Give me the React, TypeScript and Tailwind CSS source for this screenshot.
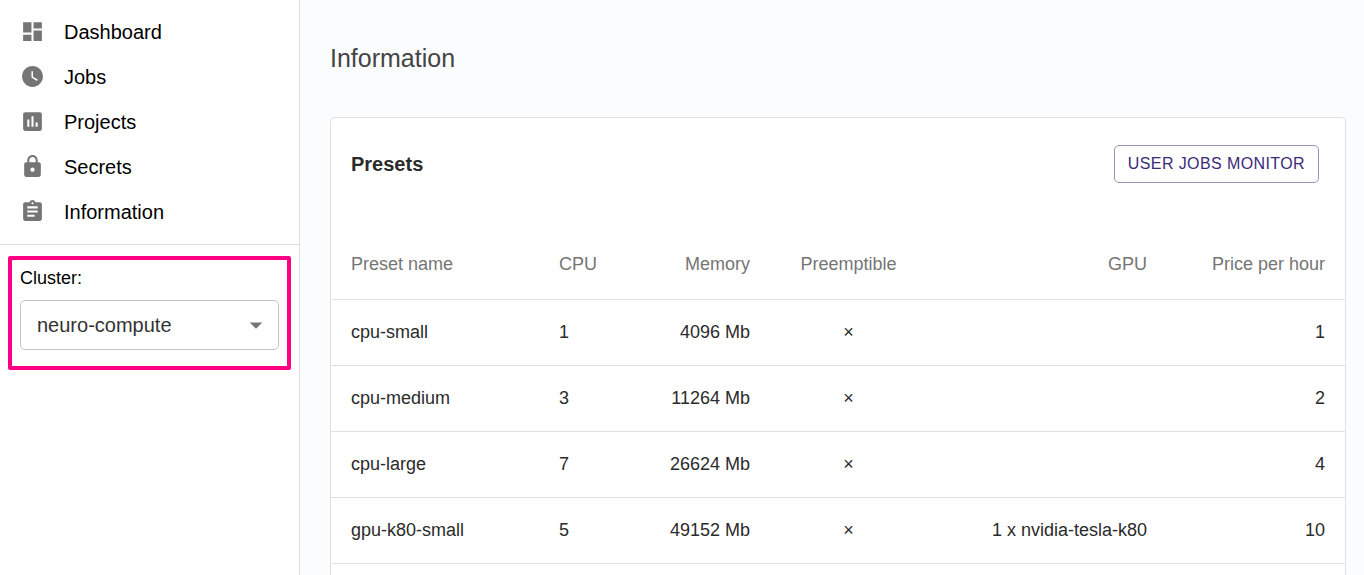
import React from "react";
import {
  MdArrowDropDown,
  MdAssessment,
  MdAssignment,
  MdDashboard,
  MdLock,
  MdWatchLater,
} from "react-icons/md";
import type { IconType } from "react-icons";

const navItems: { label: string; icon: IconType }[] = [
  { label: "Dashboard", icon: MdDashboard },
  { label: "Jobs", icon: MdWatchLater },
  { label: "Projects", icon: MdAssessment },
  { label: "Secrets", icon: MdLock },
  { label: "Information", icon: MdAssignment },
];

type Preset = { name: string; cpu: number; memory: string; gpu: string; price: number };

const presets: Preset[] = [
  { name: "cpu-small", cpu: 1, memory: "4096 Mb", gpu: "", price: 1 },
  { name: "cpu-medium", cpu: 3, memory: "11264 Mb", gpu: "", price: 2 },
  { name: "cpu-large", cpu: 7, memory: "26624 Mb", gpu: "", price: 4 },
  { name: "gpu-k80-small", cpu: 5, memory: "49152 Mb", gpu: "1 x nvidia-tesla-k80", price: 10 },
];

function Sidebar() {
  return (
    <aside className="w-[300px] shrink-0 border-r border-[#dcdde0] bg-white text-black">
      <nav className="border-b border-[#dedede] pt-[9px] pb-[10px]">
        <ul>
          {navItems.map(({ label, icon: Icon }) => (
            <li key={label}>
              <a href="#" className="flex h-[45px] items-center gap-[19px] px-5 text-[20px]">
                <Icon className="size-[25px] text-[#757575]" aria-hidden="true" />
                {label}
              </a>
            </li>
          ))}
        </ul>
      </nav>
      <div className="mx-2 mt-[11px] rounded-xs border-4 border-[#ff0084] px-2 pb-4">
        <label htmlFor="cluster" className="block h-10 text-[18px] leading-9">
          Cluster:
        </label>
        <div className="relative">
          <select
            id="cluster"
            className="h-[50px] w-full appearance-none rounded-[5px] border border-[#c4c4c4] bg-white px-4 text-[20px] text-[#333333]"
          >
            <option>neuro-compute</option>
          </select>
          <MdArrowDropDown
            className="pointer-events-none absolute top-2.5 right-2 size-[30px] text-[#757575]"
            aria-hidden="true"
          />
        </div>
      </div>
    </aside>
  );
}

function PresetTable() {
  return (
    <table className="w-full table-fixed text-[18px] text-[#2b2b2b]">
      <colgroup>
        <col className="w-[208px]" />
        <col className="w-[100px]" />
        <col className="w-[141px]" />
        <col className="w-[147px]" />
        <col className="w-[250px]" />
        <col className="w-[168px]" />
      </colgroup>
      <thead>
        <tr className="h-[68px] border-b border-[#e0e0e0] text-[#757575] *:font-normal">
          <th className="pl-5 text-left">Preset name</th>
          <th className="pl-5 text-left">CPU</th>
          <th className="pr-[30px] text-right">Memory</th>
          <th className="pr-[30px] pl-5 text-center">Preemptible</th>
          <th className="pr-[30px] text-right">GPU</th>
          <th className="pr-5 text-right">Price per hour</th>
        </tr>
      </thead>
      <tbody>
        {presets.map((p) => (
          <tr key={p.name} className="h-[66px] border-b border-[#e0e0e0]">
            <td className="pl-5">{p.name}</td>
            <td className="pl-5">{p.cpu}</td>
            <td className="pr-[30px] text-right">{p.memory}</td>
            <td className="pr-[30px] pl-5 text-center">×</td>
            <td className="pr-[30px] text-right">{p.gpu}</td>
            <td className="pr-5 text-right">{p.price}</td>
          </tr>
        ))}
      </tbody>
    </table>
  );
}

export default function App() {
  return (
    <div className="flex h-screen overflow-hidden bg-[#fbfcfe] font-['Liberation_Sans',Arial,sans-serif]">
      <Sidebar />
      <main className="flex min-w-0 flex-1 flex-col pr-[18px] pl-[30px]">
        <h1 className="flex h-[117px] shrink-0 items-center text-[25px] text-[#444444]">Information</h1>
        <section className="flex-1 rounded-t-[5px] border border-b-0 border-[#e0e0e0] bg-white">
          <header className="flex h-[113px] items-start justify-between pt-[27px] pr-[26px] pl-5">
            <h2 className="text-[20px] leading-[38px] font-bold text-[#2b2b2b]">Presets</h2>
            <button
              type="button"
              className="h-[38px] rounded-[5px] border border-[#9b90b9] px-[13px] text-[16px] tracking-wide text-[#3b2a78] uppercase"
            >
              User jobs monitor
            </button>
          </header>
          <PresetTable />
        </section>
      </main>
    </div>
  );
}
